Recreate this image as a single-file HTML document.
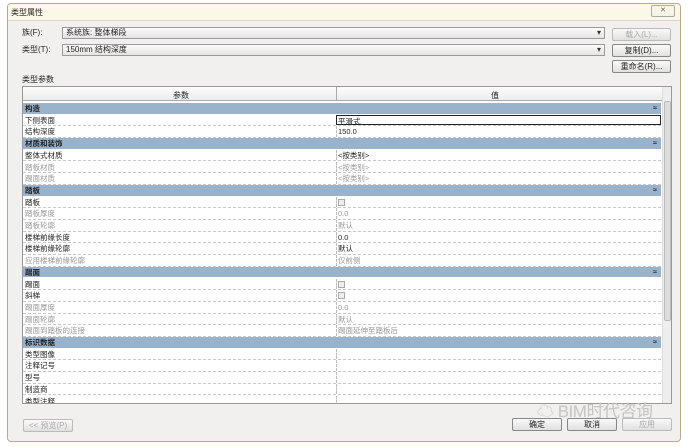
<!DOCTYPE html>
<html><head><meta charset="utf-8"><style>
*{margin:0;padding:0;box-sizing:border-box}
body{width:689px;height:447px;background:#fff;position:relative;overflow:hidden;font-family:"Liberation Sans","Noto Sans CJK SC",sans-serif;font-size:8px;color:#222}
.win{position:absolute;left:7px;top:3px;width:674px;height:439px;border:1px solid #b9a98a;border-radius:4px;background:#f1f0ee}
.title{position:absolute;left:0;top:0;right:0;height:17px;background:#fbf8e8;border-bottom:1px solid #ddd6c0;border-radius:3px 3px 0 0}
.a{position:absolute;white-space:nowrap}
.combo{position:absolute;height:12px;border:1px solid #9a9a9a;background:linear-gradient(#fbfbfb,#e4e4e4);font-size:8px;line-height:10px;padding-left:3px}
.combo:after{content:"▾";position:absolute;right:3px;top:0;font-size:8px;color:#333}
.btn{position:absolute;height:13px;border:1px solid #888;border-radius:2px;background:linear-gradient(#fafafa,#e0e0e0);text-align:center;font-size:8px;line-height:11px}
.dis{color:#aaa;border-color:#bbb}
.tbl{position:absolute;left:22px;top:86px;width:650px;height:318px;border:1px solid #999;background:#fff;overflow:hidden}
.hdr{position:absolute;left:0;top:0;width:639px;height:14px;background:linear-gradient(#fdfdfd,#ececec);border-bottom:1px solid #aaa}
.row{position:absolute;left:0;width:638px;height:11.7px;border-bottom:1px dashed #c8c8c8;font-size:7.5px;line-height:11px}
.row .k{position:absolute;left:2px}
.row .v{position:absolute;left:313px;top:0;height:100%;border-left:1px dashed #bbb;padding-left:1px}
.g{color:#999}
.sec{background:#9ab3cd;border-bottom:1px solid #fff;font-weight:bold}
.sec .v{border:none}
.sec:after{content:"≈";position:absolute;right:4px;font-size:7px;top:0}
.cb{display:inline-block;width:7px;height:7px;border:1px solid #aaa;background:#eee;margin-top:2px}
.sb{position:absolute;left:639px;top:0;width:10px;height:316px;background:#eee;border-left:1px solid #ddd}
</style></head><body>
<div class="win">
<div class="title"><span class="a" style="left:3px;top:3px;font-size:8px">类型属性</span>
<div class="a" style="left:643px;top:1px;width:24px;height:12px;border:1px solid #aaa;border-radius:2px;background:#f7f4e8;font-size:7px;text-align:center;line-height:10px;color:#666">✕</div></div>
</div>
<span class="a" style="left:22px;top:27px">族(F):</span>
<div class="combo" style="left:62px;top:27px;width:543px">系统族: 整体梯段</div>
<span class="a" style="left:22px;top:44px">类型(T):</span>
<div class="combo" style="left:62px;top:44px;width:543px">150mm 结构深度</div>
<div class="btn dis" style="left:612px;top:28px;width:59px">载入(L)...</div>
<div class="btn" style="left:612px;top:44px;width:59px">复制(D)...</div>
<div class="btn" style="left:612px;top:60px;width:59px">重命名(R)...</div>
<span class="a" style="left:22px;top:74px">类型参数</span>
<div class="tbl">
<div class="hdr"><span class="a" style="left:150px;top:3px">参数</span><span class="a" style="left:313px;top:0;height:14px;border-left:1px solid #aaa"></span><span class="a" style="left:468px;top:3px">值</span></div>
<div class="row sec" style="top:16px"><span class="k">构造</span></div>
<div class="row" style="top:27.7px"><span class="k">下侧表面</span><span class="v" style="width:325px;border:1px solid #222">平滑式</span></div>
<div class="row" style="top:39.4px"><span class="k">结构深度</span><span class="v">150.0</span></div>
<div class="row sec" style="top:51.1px"><span class="k">材质和装饰</span></div>
<div class="row" style="top:62.8px"><span class="k">整体式材质</span><span class="v">&lt;按类别&gt;</span></div>
<div class="row g" style="top:74.5px"><span class="k">踏板材质</span><span class="v">&lt;按类别&gt;</span></div>
<div class="row g" style="top:86.2px"><span class="k">踢面材质</span><span class="v">&lt;按类别&gt;</span></div>
<div class="row sec" style="top:97.9px"><span class="k">踏板</span></div>
<div class="row" style="top:109.6px"><span class="k">踏板</span><span class="v"><span class="cb"></span></span></div>
<div class="row g" style="top:121.3px"><span class="k">踏板厚度</span><span class="v">0.0</span></div>
<div class="row g" style="top:133px"><span class="k">踏板轮廓</span><span class="v">默认</span></div>
<div class="row" style="top:144.7px"><span class="k">楼梯前缘长度</span><span class="v">0.0</span></div>
<div class="row" style="top:156.4px"><span class="k">楼梯前缘轮廓</span><span class="v">默认</span></div>
<div class="row g" style="top:168.1px"><span class="k">应用楼梯前缘轮廓</span><span class="v">仅前侧</span></div>
<div class="row sec" style="top:179.8px"><span class="k">踢面</span></div>
<div class="row" style="top:191.5px"><span class="k">踢面</span><span class="v"><span class="cb"></span></span></div>
<div class="row" style="top:203.2px"><span class="k">斜梯</span><span class="v"><span class="cb"></span></span></div>
<div class="row g" style="top:214.9px"><span class="k">踢面厚度</span><span class="v">0.0</span></div>
<div class="row g" style="top:226.6px"><span class="k">踢面轮廓</span><span class="v">默认</span></div>
<div class="row g" style="top:238.3px"><span class="k">踢面到踏板的连接</span><span class="v">踢面延伸至踏板后</span></div>
<div class="row sec" style="top:250px"><span class="k">标识数据</span></div>
<div class="row" style="top:261.7px"><span class="k">类型图像</span><span class="v"></span></div>
<div class="row" style="top:273.4px"><span class="k">注释记号</span><span class="v"></span></div>
<div class="row" style="top:285.1px"><span class="k">型号</span><span class="v"></span></div>
<div class="row" style="top:296.8px"><span class="k">制造商</span><span class="v"></span></div>
<div class="row" style="top:308.5px"><span class="k">类型注释</span><span class="v"></span></div>
<div class="sb"><div class="a" style="left:1px;top:14px;width:7px;height:220px;background:#dcdcdc;border:1px solid #bbb;border-radius:2px"></div></div>
</div>
<div class="btn dis" style="left:23px;top:419px;width:50px">&lt;&lt; 预览(P)</div>
<span class="a" style="left:537px;top:397px;font-size:17px;color:#c4c4c4;letter-spacing:-0.5px">☁ BIM时代咨询</span>
<div class="btn" style="left:512px;top:418px;width:50px">确定</div>
<div class="btn" style="left:567px;top:418px;width:50px">取消</div>
<div class="btn dis" style="left:622px;top:418px;width:50px">应用</div>
</body></html>
